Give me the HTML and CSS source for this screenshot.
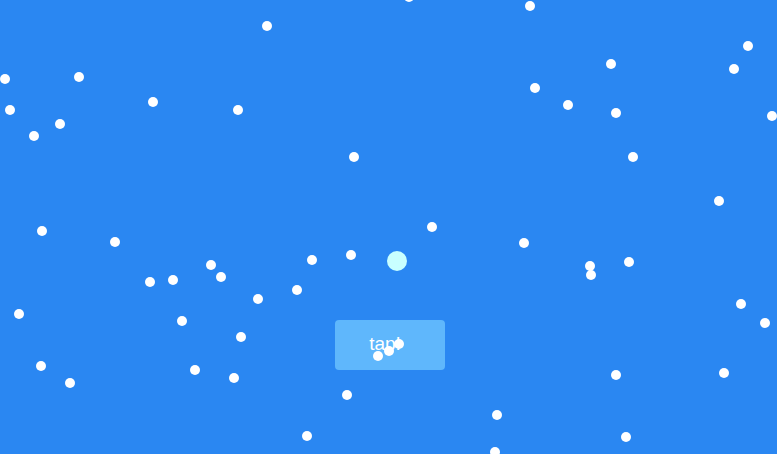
FILE: index.html
```html
<!DOCTYPE html>
<html>
<head>
<meta charset="utf-8">
<link rel="stylesheet" href="styles.css">
</head>
<body>
<div class="stage">
  <div class="controls">
    <button class="tap">tap!</button>
  </div>
  <div class="player" style="left:397px;top:261px"></div>
  <div class="dot" style="left:409px;top:-3px"></div>
  <div class="dot" style="left:530px;top:6px"></div>
  <div class="dot" style="left:267px;top:26px"></div>
  <div class="dot" style="left:748px;top:46px"></div>
  <div class="dot" style="left:611px;top:64px"></div>
  <div class="dot" style="left:734px;top:69px"></div>
  <div class="dot" style="left:5px;top:79px"></div>
  <div class="dot" style="left:79px;top:77px"></div>
  <div class="dot" style="left:535px;top:88px"></div>
  <div class="dot" style="left:153px;top:102px"></div>
  <div class="dot" style="left:10px;top:110px"></div>
  <div class="dot" style="left:238px;top:110px"></div>
  <div class="dot" style="left:568px;top:105px"></div>
  <div class="dot" style="left:616px;top:113px"></div>
  <div class="dot" style="left:772px;top:116px"></div>
  <div class="dot" style="left:60px;top:124px"></div>
  <div class="dot" style="left:34px;top:136px"></div>
  <div class="dot" style="left:354px;top:157px"></div>
  <div class="dot" style="left:633px;top:157px"></div>
  <div class="dot" style="left:719px;top:201px"></div>
  <div class="dot" style="left:432px;top:227px"></div>
  <div class="dot" style="left:42px;top:231px"></div>
  <div class="dot" style="left:115px;top:242px"></div>
  <div class="dot" style="left:524px;top:243px"></div>
  <div class="dot" style="left:351px;top:255px"></div>
  <div class="dot" style="left:312px;top:260px"></div>
  <div class="dot" style="left:590px;top:266px"></div>
  <div class="dot" style="left:629px;top:262px"></div>
  <div class="dot" style="left:211px;top:265px"></div>
  <div class="dot" style="left:591px;top:275px"></div>
  <div class="dot" style="left:150px;top:282px"></div>
  <div class="dot" style="left:173px;top:280px"></div>
  <div class="dot" style="left:221px;top:277px"></div>
  <div class="dot" style="left:297px;top:290px"></div>
  <div class="dot" style="left:258px;top:299px"></div>
  <div class="dot" style="left:741px;top:304px"></div>
  <div class="dot" style="left:19px;top:314px"></div>
  <div class="dot" style="left:182px;top:321px"></div>
  <div class="dot" style="left:765px;top:323px"></div>
  <div class="dot" style="left:241px;top:337px"></div>
  <div class="dot" style="left:41px;top:366px"></div>
  <div class="dot" style="left:70px;top:383px"></div>
  <div class="dot" style="left:195px;top:370px"></div>
  <div class="dot" style="left:234px;top:378px"></div>
  <div class="dot" style="left:616px;top:375px"></div>
  <div class="dot" style="left:724px;top:373px"></div>
  <div class="dot" style="left:347px;top:395px"></div>
  <div class="dot" style="left:497px;top:415px"></div>
  <div class="dot" style="left:307px;top:436px"></div>
  <div class="dot" style="left:626px;top:437px"></div>
  <div class="dot" style="left:495px;top:452px"></div>
  <div class="dot" style="left:378px;top:356px"></div>
  <div class="dot" style="left:389px;top:351px"></div>
  <div class="dot" style="left:399px;top:344px"></div>
</div>
</body>
</html>
```

FILE: styles.css
```css
html, body {
  margin: 0;
  padding: 0;
  width: 777px;
  height: 454px;
  overflow: hidden;
  background: #2a87f2;
  font-family: "Liberation Sans", Arial, sans-serif;
}
.stage {
  position: relative;
  width: 777px;
  height: 454px;
  overflow: hidden;
}
.controls {
  display: flex;
  padding: 320px 0 0 335px;
}
.tap {
  width: 110px;
  height: 50px;
  border: none;
  border-radius: 4px;
  background: #5fb7fc;
  color: #ffffff;
  font-family: "Liberation Sans", Arial, sans-serif;
  font-size: 19px;
  padding: 0 10px 2px 0;
  margin: 0;
}
.dot {
  position: absolute;
  width: 10px;
  height: 10px;
  margin: -5px 0 0 -5px;
  border-radius: 50%;
  background: #ffffff;
}
.player {
  position: absolute;
  width: 20px;
  height: 20px;
  margin: -10px 0 0 -10px;
  border-radius: 50%;
  background: #c8ffff;
}
```
